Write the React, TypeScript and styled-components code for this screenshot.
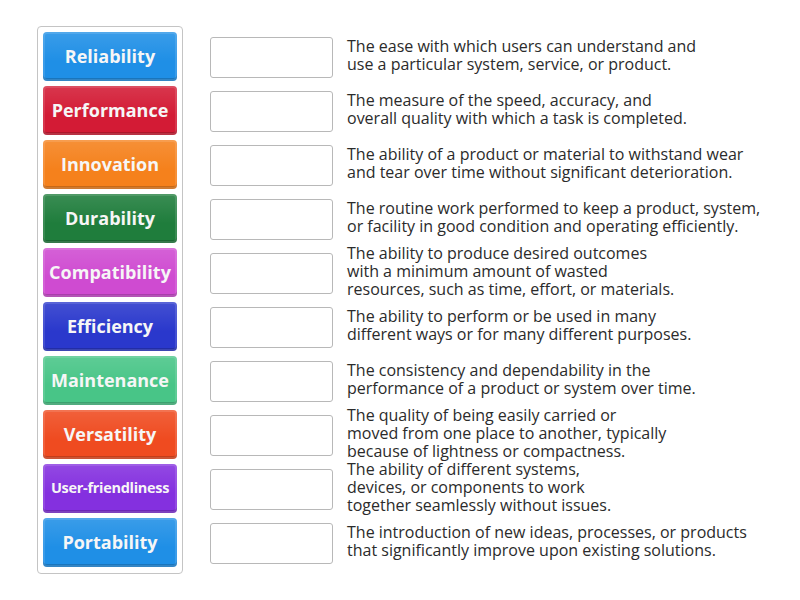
import { Fragment } from 'react';
import { createGlobalStyle, styled } from 'styled-components';

const terms = [
  { label: 'Reliability', color: '#1f8fe6' },
  { label: 'Performance', color: '#d31b35' },
  { label: 'Innovation', color: '#f5811c' },
  { label: 'Durability', color: '#1f7d3c' },
  { label: 'Compatibility', color: '#cf4bd1' },
  { label: 'Efficiency', color: '#2a38cc' },
  { label: 'Maintenance', color: '#48c587' },
  { label: 'Versatility', color: '#ef4b20' },
  { label: 'User-friendliness', color: '#8430df', small: true },
  { label: 'Portability', color: '#1f8fe6' },
];

const definitions = [
  ['The ease with which users can understand and', 'use a particular system, service, or product.'],
  ['The measure of the speed, accuracy, and', 'overall quality with which a task is completed.'],
  ['The ability of a product or material to withstand wear', 'and tear over time without significant deterioration.'],
  ['The routine work performed to keep a product, system,', 'or facility in good condition and operating efficiently.'],
  ['The ability to produce desired outcomes', 'with a minimum amount of wasted', 'resources, such as time, effort, or materials.'],
  ['The ability to perform or be used in many', 'different ways or for many different purposes.'],
  ['The consistency and dependability in the', 'performance of a product or system over time.'],
  ['The quality of being easily carried or', 'moved from one place to another, typically', 'because of lightness or compactness.'],
  ['The ability of different systems,', 'devices, or components to work', 'together seamlessly without issues.'],
  ['The introduction of new ideas, processes, or products', 'that significantly improve upon existing solutions.'],
];

const GlobalStyle = createGlobalStyle`
  body {
    margin: 0;
    background: #ffffff;
    font-family: "Open Sans", "Liberation Sans", sans-serif;
  }
`;

const Page = styled.div`
  display: flex;
  align-items: flex-start;
  padding: 26px 0 0 37px;
`;

const TermPanel = styled.div`
  display: flex;
  flex-direction: column;
  gap: 5px;
  padding: 5px 5px 6px;
  border: 1px solid #c4c4c4;
  border-radius: 4px;
`;

const TermButton = styled.div<{ $color: string; $small?: boolean }>`
  width: 134px;
  height: 49px;
  box-sizing: border-box;
  display: flex;
  align-items: center;
  justify-content: center;
  padding-bottom: 2px;
  border-radius: 4px;
  background: ${(p) => p.$color};
  background-image: linear-gradient(rgba(255, 255, 255, 0.12), rgba(255, 255, 255, 0) 60%);
  box-shadow:
    inset 0 0 0 2px rgba(255, 255, 255, 0.12),
    inset 0 -3px 0 rgba(0, 0, 0, 0.18);
  color: #f6f6f6;
  font-weight: 700;
  font-size: ${(p) => (p.$small ? '14.5px' : '18px')};
  letter-spacing: ${(p) => (p.$small ? '-0.3px' : '0')};
  white-space: nowrap;
`;

const Rows = styled.div`
  display: flex;
  flex-direction: column;
  gap: 5px;
  padding: 6px 0 0 27px;
`;

const Row = styled.div`
  height: 49px;
  display: flex;
  align-items: center;
  gap: 14px;
`;

const DropBox = styled.div`
  width: 123px;
  height: 41px;
  margin-top: 1px;
  box-sizing: border-box;
  border: 1px solid #b8b8b8;
  border-radius: 3px;
  flex-shrink: 0;
`;

const Definition = styled.p`
  margin: -4px 0 0;
  color: #2b2b2b;
  font-size: 16px;
  line-height: 18px;
  white-space: nowrap;
`;

export default function App() {
  return (
    <>
      <GlobalStyle />
      <Page>
        <TermPanel>
          {terms.map((t) => (
            <TermButton key={t.label} $color={t.color} $small={t.small}>
              {t.label}
            </TermButton>
          ))}
        </TermPanel>
        <Rows>
          {definitions.map((lines) => (
            <Row key={lines[0]}>
              <DropBox />
              <Definition>
                {lines.map((l, i) => (
                  <Fragment key={l}>
                    {i > 0 && <br />}
                    {l}
                  </Fragment>
                ))}
              </Definition>
            </Row>
          ))}
        </Rows>
      </Page>
    </>
  );
}
